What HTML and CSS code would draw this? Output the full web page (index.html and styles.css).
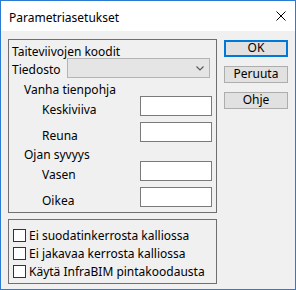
FILE: index.html
```html
<!DOCTYPE html>
<html>
<head>
<meta charset="utf-8">
<link rel="stylesheet" href="styles.css">
</head>
<body>
<div class="window">
  <div class="titlebar">
    <span class="title">Parametriasetukset</span>
    <svg class="close" width="10" height="10" viewBox="0 0 10 10"><path d="M0.5 0.5 L9.5 9.5 M9.5 0.5 L0.5 9.5" stroke="#000" stroke-width="1" fill="none"/></svg>
  </div>
  <div class="content">
    <div class="left">
      <div class="group group-main">
        <div class="row row-title"><span class="lbl">Taiteviivojen koodit</span></div>
        <div class="row row-file">
          <span class="lbl lbl-file">Tiedosto</span>
          <div class="combo">
            <svg class="chev" width="8" height="5" viewBox="0 0 8 5"><path d="M0.5 0.5 L4 4 L7.5 0.5" stroke="#5a5a5a" stroke-width="1.2" fill="none"/></svg>
          </div>
        </div>
        <div class="row row-sub"><span class="lbl lbl-sub">Vanha tienpohja</span></div>
        <div class="row row-field"><span class="lbl lbl-field">Keskiviiva</span><div class="input"></div></div>
        <div class="row row-field"><span class="lbl lbl-field">Reuna</span><div class="input"></div></div>
        <div class="row row-sub2"><span class="lbl lbl-sub">Ojan syvyys</span></div>
        <div class="row row-field"><span class="lbl lbl-field">Vasen</span><div class="input"></div></div>
        <div class="row row-field"><span class="lbl lbl-field">Oikea</span><div class="input"></div></div>
      </div>
      <div class="group group-checks">
        <div class="check"><span class="box"></span><span class="ctext">Ei suodatinkerrosta kalliossa</span></div>
        <div class="check"><span class="box"></span><span class="ctext">Ei jakavaa kerrosta kalliossa</span></div>
        <div class="check"><span class="box"></span><span class="ctext">Käytä InfraBIM pintakoodausta</span></div>
      </div>
    </div>
    <div class="right">
      <div class="btn btn-default">OK</div>
      <div class="btn">Peruuta</div>
      <div class="btn">Ohje</div>
    </div>
  </div>
</div>
</body>
</html>
```

FILE: styles.css
```css
* { box-sizing: border-box; }
html, body { margin: 0; padding: 0; }
body {
  font-family: "Noto Sans", "Liberation Sans", sans-serif;
  font-size: 12px;
  color: #000;
  background: #f0f0f0;
}
.window {
  width: 296px;
  height: 290px;
  border: 1px solid #2b7bd3;
  background: #f0f0f0;
  display: flex;
  flex-direction: column;
}
.titlebar {
  height: 30px;
  background: #fff;
  display: flex;
  align-items: center;
  justify-content: space-between;
  padding: 0 9px 0 8px;
}
.title {
  line-height: 15px;
  padding-top: 3px;
}
.close { display: block; }
.content {
  flex: 1;
  display: flex;
  gap: 7px;
  padding: 8px 7px 5px 7px;
}
.left {
  width: 209px;
  display: flex;
  flex-direction: column;
  gap: 6px;
}
.group {
  border: 1px solid #6f6f6f;
}
.group-main {
  height: 174px;
  padding: 0 4px 0 3px;
}
.row {
  display: flex;
  align-items: flex-start;
}
.lbl {
  line-height: 15px;
  white-space: nowrap;
}
.row-title { height: 18px; padding-top: 4px; }
.row-file { height: 20px; align-items: flex-start; }
.lbl-file { width: 55px; padding-top: 4px; }
.combo {
  width: 143px;
  height: 20px;
  background: #e5e5e5;
  border: 1px solid #b4b4b4;
  display: flex;
  align-items: center;
  justify-content: flex-end;
  padding-right: 5px;
}
.chev { display: block; }
.row-sub { height: 18px; padding-top: 4px; }
.row-sub2 { height: 19px; padding-top: 5px; }
.lbl-sub { padding-left: 12px; }
.row-field {
  height: 20px;
  justify-content: space-between;
}
.row-field + .row-field { margin-top: 6px; }
.lbl-field {
  padding-left: 30px;
  padding-top: 6px;
}
.input {
  width: 72px;
  height: 20px;
  background: #fff;
  border: 1px solid #7a7a7a;
}
.group-checks {
  height: 65px;
  padding: 6px 0 0 4px;
}
.check {
  height: 18px;
  display: flex;
  align-items: center;
  gap: 3px;
}
.box {
  width: 13px;
  height: 13px;
  background: #fff;
  border: 1px solid #333;
}
.ctext { line-height: 15px; white-space: nowrap; }
.right {
  width: 64px;
  display: flex;
  flex-direction: column;
  gap: 9px;
  padding-top: 1px;
}
.btn {
  height: 17px;
  background: #e1e1e1;
  border: 1px solid #adadad;
  display: flex;
  align-items: center;
  justify-content: center;
  line-height: 15px;
  padding-bottom: 2px;
}
.btn-default {
  border: 2px solid #0078d7;
}
```
